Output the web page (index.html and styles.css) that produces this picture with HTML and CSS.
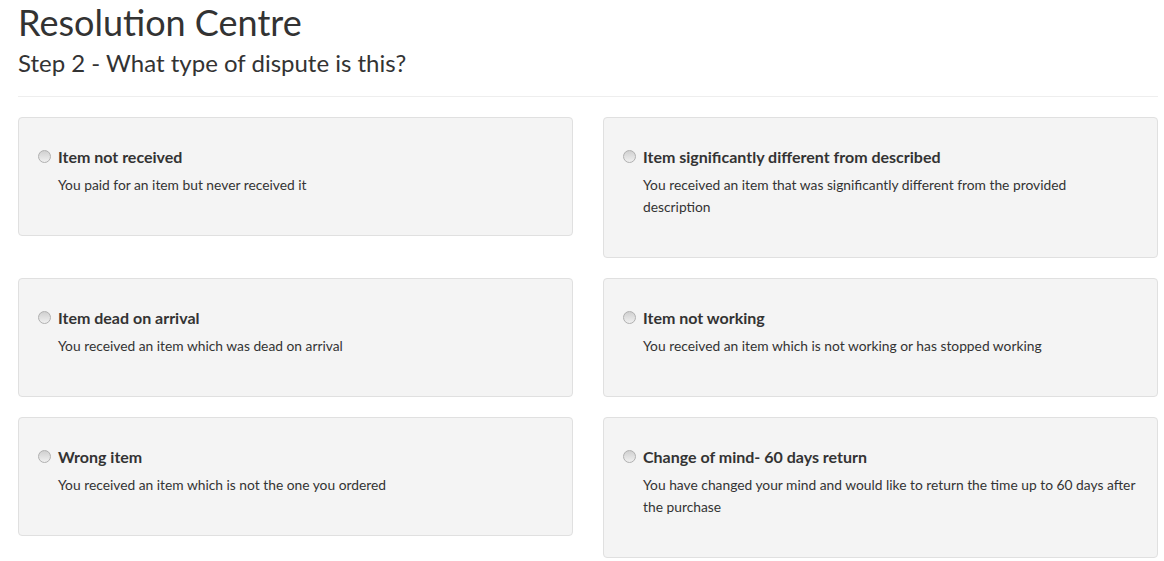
FILE: index.html
```html
<!DOCTYPE html>
<html lang="en">
<head>
<meta charset="utf-8">
<title>Resolution Centre</title>
<link rel="stylesheet" href="styles.css">
</head>
<body>
<div class="container">
  <h1 class="page-title">Resolution Centre</h1>
  <h2 class="step-title">Step 2 - What type of dispute is this?</h2>
  <hr class="divider">
  <div class="options">
    <label class="card">
      <span class="option-head"><span class="radio"></span><span class="option-title">Item not received</span></span>
      <span class="option-desc">You paid for an item but never received it</span>
    </label>
    <label class="card">
      <span class="option-head"><span class="radio"></span><span class="option-title">Item significantly different from described</span></span>
      <span class="option-desc">You received an item that was significantly different from the provided description</span>
    </label>
    <label class="card">
      <span class="option-head"><span class="radio"></span><span class="option-title">Item dead on arrival</span></span>
      <span class="option-desc">You received an item which was dead on arrival</span>
    </label>
    <label class="card">
      <span class="option-head"><span class="radio"></span><span class="option-title">Item not working</span></span>
      <span class="option-desc">You received an item which is not working or has stopped working</span>
    </label>
    <label class="card">
      <span class="option-head"><span class="radio"></span><span class="option-title">Wrong item</span></span>
      <span class="option-desc">You received an item which is not the one you ordered</span>
    </label>
    <label class="card">
      <span class="option-head"><span class="radio"></span><span class="option-title">Change of mind- 60 days return</span></span>
      <span class="option-desc">You have changed your mind and would like to return the time up to 60 days after the purchase</span>
    </label>
  </div>
</div>
</body>
</html>
```

FILE: styles.css
```css
* { box-sizing: border-box; }
html, body { margin: 0; padding: 0; background: #fff; }
body {
  font-family: Lato, "Open Sans", "Liberation Sans", sans-serif;
  color: #333;
}
.container {
  width: 1140px;
  margin-left: 18px;
}
.page-title {
  font-size: 36px;
  font-weight: 400;
  line-height: 40px;
  margin: 2px 0 0 0;
}
.step-title {
  font-size: 24px;
  font-weight: 400;
  line-height: 30px;
  margin: 6px 0 0 0;
}
.divider {
  border: 0;
  border-top: 1px solid #eee;
  margin: 18px 0 20px 0;
}
.options {
  display: grid;
  grid-template-columns: 555px 555px;
  column-gap: 30px;
  row-gap: 20px;
  align-items: start;
}
.card {
  display: block;
  background: #f4f4f4;
  border: 1px solid #e0e0e0;
  border-radius: 4px;
  padding: 28px 19px 29px 19px;
  cursor: pointer;
}
.option-head {
  display: flex;
  align-items: center;
  height: 20px;
}
.radio {
  width: 13px;
  height: 13px;
  border-radius: 50%;
  border: 1px solid #b0b0b0;
  background: linear-gradient(#d0d0d0, #f0f0f0);
  margin-right: 7px;
  flex: none;
}
.option-title {
  font-size: 16px;
  font-weight: 700;
  color: #333;
}
.option-desc {
  display: block;
  margin: 8px 2px 10px 20px;
  font-size: 13.8px;
  line-height: 22px;
  color: #333;
}
```
